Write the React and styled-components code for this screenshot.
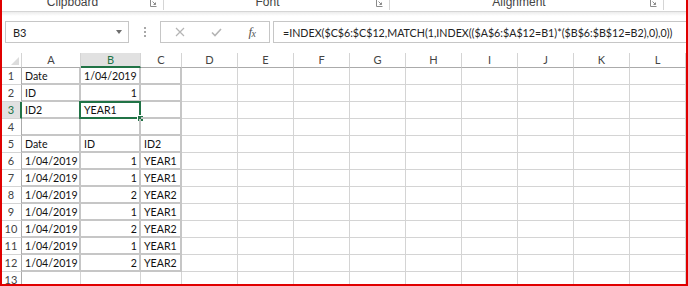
import React from "react";
import styled, { createGlobalStyle } from "styled-components";

const Global = createGlobalStyle`
  html, body { margin: 0; padding: 0; background: #fff; }
  body { overflow: hidden; }
  * { box-sizing: border-box; }
`;

const GREEN = "#217346";
const GRID = "#d4d4d4";
const DATA_BORDER = "#c6c6c6";
const HEAD_LINE = "#ababab";

const Frame = styled.div`
  width: 688px;
  height: 286px;
  border-left: 2px solid #e00000;
  border-right: 2px solid #e00000;
  border-bottom: 2px solid #e00000;
  overflow: hidden;
  background: #fff;
  font-family: Lato, "Liberation Sans", sans-serif;
  color: #222;
`;

const Ribbon = styled.div`
  display: flex;
  height: 12px;
  border-bottom: 1px solid #d5d5d5;
  overflow: hidden;
`;

const Group = styled.div`
  position: relative;
  width: ${(p) => p.$w}px;
  flex: none;
  border-right: 1px solid #d5d5d5;
  height: 10px;
  padding-right: ${(p) => p.$pr}px;
  text-align: center;
`;

const GroupLabel = styled.div`
  font-family: "Liberation Sans", Arial, sans-serif;
  font-size: 12px;
  line-height: 12px;
  color: #444;
  margin-top: -4px;
`;

const Launcher = styled.svg`
  position: absolute;
  right: 6px;
  top: 0;
`;

const FormulaBar = styled.div`
  display: flex;
  align-items: flex-start;
  height: 41px;
  padding-top: 9px;
  padding-left: 3px;
  background: linear-gradient(#ececec, #fff 4px);
`;

const NameBox = styled.div`
  width: 124px;
  height: 22px;
  flex: none;
  border: 1px solid #c6c6c6;
  background: #fff;
  display: flex;
  align-items: center;
  justify-content: space-between;
  padding: 0 6px 0 7px;
  font-size: 11px;
  color: #222;
`;

const Caret = styled.span`
  width: 0;
  height: 0;
  border-left: 3.5px solid transparent;
  border-right: 3.5px solid transparent;
  border-top: 4px solid #6d6d6d;
`;

const Dots = styled.div`
  width: 31px;
  flex: none;
  height: 22px;
  display: flex;
  flex-direction: column;
  align-items: center;
  justify-content: center;
  gap: 2px;
  & > span {
    width: 2px;
    height: 2px;
    background: #a8a8a8;
  }
`;

const ButtonBox = styled.div`
  width: 110px;
  height: 22px;
  flex: none;
  border: 1px solid #c6c6c6;
  display: flex;
  align-items: center;
  padding-left: 14px;
`;

const IconSlot = styled.div`
  width: ${(p) => p.$w}px;
  flex: none;
  display: flex;
  justify-content: center;
  align-items: center;
`;

const Fx = styled.span`
  font-family: "Liberation Serif", "Times New Roman", serif;
  font-style: italic;
  font-size: 13px;
  color: #555;
  letter-spacing: -0.5px;
  & > sub {
    font-size: 10px;
    vertical-align: -1px;
  }
`;

const FormulaBox = styled.div`
  flex: 1;
  margin-left: 3px;
  height: 22px;
  border: 1px solid #c6c6c6;
  border-right: none;
  padding-left: 9px;
  display: flex;
  align-items: center;
  font-size: 10.7px;
  color: #222;
  white-space: nowrap;
  overflow: hidden;
`;

const Sheet = styled.div`
  display: grid;
  grid-template-columns: 20px 59px 60px 41px repeat(9, 56px);
  grid-template-rows: 15px repeat(13, 17px);
`;

const Corner = styled.div`
  border-right: 1px solid ${GRID};
  border-bottom: 1px solid ${HEAD_LINE};
  position: relative;
  &::after {
    content: "";
    position: absolute;
    right: 2px;
    bottom: 2px;
    width: 0;
    height: 0;
    border-left: 8px solid transparent;
    border-bottom: 8px solid #dcdcdc;
  }
`;

const ColHead = styled.div`
  font-size: 11px;
  line-height: 14px;
  text-align: center;
  color: ${(p) => (p.$active ? GREEN : "#444")};
  background: ${(p) => (p.$active ? "#e1e1e1" : "#fff")};
  border-right: 1px solid ${GRID};
  border-bottom: ${(p) => (p.$active ? `2px solid ${GREEN}` : `1px solid ${HEAD_LINE}`)};
`;

const RowHead = styled.div`
  font-size: 11px;
  line-height: 16px;
  text-align: center;
  color: ${(p) => (p.$active ? GREEN : "#444")};
  background: ${(p) => (p.$active ? "#e1e1e1" : "#fff")};
  border-right: ${(p) => (p.$active ? `2px solid ${GREEN}` : `1px solid ${HEAD_LINE}`)};
  border-bottom: 1px solid ${GRID};
  padding-right: ${(p) => (p.$active ? 0 : 1)}px;
`;

const Cell = styled.div`
  position: relative;
  font-size: 10.6px;
  line-height: 16px;
  white-space: nowrap;
  color: #111;
  text-align: ${(p) => (p.$num ? "right" : "left")};
  padding: 0 2px 0 3px;
  border-right: ${(p) => (p.$bordered ? `2px solid ${DATA_BORDER}` : `1px solid ${GRID}`)};
  border-bottom: ${(p) => (p.$bordered ? `2px solid ${DATA_BORDER}` : `1px solid ${GRID}`)};
`;

const Selection = styled.div`
  position: absolute;
  left: -2px;
  top: -1px;
  right: -2px;
  bottom: -2px;
  border: 2px solid ${GREEN};
  pointer-events: none;
`;

const Handle = styled.div`
  position: absolute;
  right: -4px;
  bottom: -4px;
  width: 6px;
  height: 6px;
  background: ${GREEN};
  border-left: 1px solid #fff;
  border-top: 1px solid #fff;
`;

const COLS = ["A", "B", "C", "D", "E", "F", "G", "H", "I", "J", "K", "L"];

const ids = [1, 1, 2, 1, 2, 1, 2];
const DATA = {
  1: ["Date", "1/04/2019"],
  2: ["ID", 1],
  3: ["ID2", "YEAR1"],
  4: [],
  5: ["Date", "ID", "ID2"],
};
ids.forEach((n, i) => {
  DATA[6 + i] = ["1/04/2019", n, `YEAR${n}`];
});

function LauncherIcon() {
  return (
    <Launcher width="7" height="7" viewBox="0 0 7 7">
      <path d="M0.5 0 V6.5 H6.5" fill="none" stroke="#8a8a8a" strokeWidth="1" />
      <path d="M2.5 1.5 L5.5 4.5 M5.5 2.5 V4.5 H3.5" fill="none" stroke="#8a8a8a" strokeWidth="1" />
    </Launcher>
  );
}

export default function App() {
  const rows = [];
  for (let r = 1; r <= 13; r++) {
    const data = DATA[r] || [];
    rows.push(
      <RowHead key={`h${r}`} $active={r === 3}>
        {r}
      </RowHead>
    );
    COLS.forEach((c, ci) => {
      const v = data[ci];
      const bordered = ci < 3 && r <= 12;
      const selected = r === 3 && c === "B";
      rows.push(
        <Cell key={`${c}${r}`} $bordered={bordered} $num={typeof v === "number"}>
          {v}
          {selected && (
            <Selection>
              <Handle />
            </Selection>
          )}
        </Cell>
      );
    });
  }

  return (
    <Frame>
      <Global />
      <Ribbon>
        <Group $w={162} $pr={20}>
          <GroupLabel>Clipboard</GroupLabel>
          <LauncherIcon />
        </Group>
        <Group $w={226} $pr={18}>
          <GroupLabel>Font</GroupLabel>
          <LauncherIcon />
        </Group>
        <Group $w={274} $pr={15}>
          <GroupLabel>Alignment</GroupLabel>
          <LauncherIcon />
        </Group>
      </Ribbon>
      <FormulaBar>
        <NameBox>
          <span>B3</span>
          <Caret />
        </NameBox>
        <Dots>
          <span />
          <span />
          <span />
        </Dots>
        <ButtonBox>
          <IconSlot $w={10}>
            <svg width="10" height="10" viewBox="0 0 10 10">
              <path d="M1 1 L9 9 M9 1 L1 9" stroke="#b5b5b5" strokeWidth="1.2" />
            </svg>
          </IconSlot>
          <IconSlot $w={62}>
            <svg width="11" height="9" viewBox="0 0 11 9">
              <path d="M1 4.5 L4 7.5 L10 1" fill="none" stroke="#b5b5b5" strokeWidth="1.6" />
            </svg>
          </IconSlot>
          <IconSlot $w={10}>
            <Fx>
              f<sub>x</sub>
            </Fx>
          </IconSlot>
        </ButtonBox>
        <FormulaBox>
          =INDEX($C$6:$C$12,MATCH(1,INDEX(($A$6:$A$12=B1)*($B$6:$B$12=B2),0),0))
        </FormulaBox>
      </FormulaBar>
      <Sheet>
        <Corner />
        {COLS.map((c) => (
          <ColHead key={c} $active={c === "B"}>
            {c}
          </ColHead>
        ))}
        {rows}
      </Sheet>
    </Frame>
  );
}
